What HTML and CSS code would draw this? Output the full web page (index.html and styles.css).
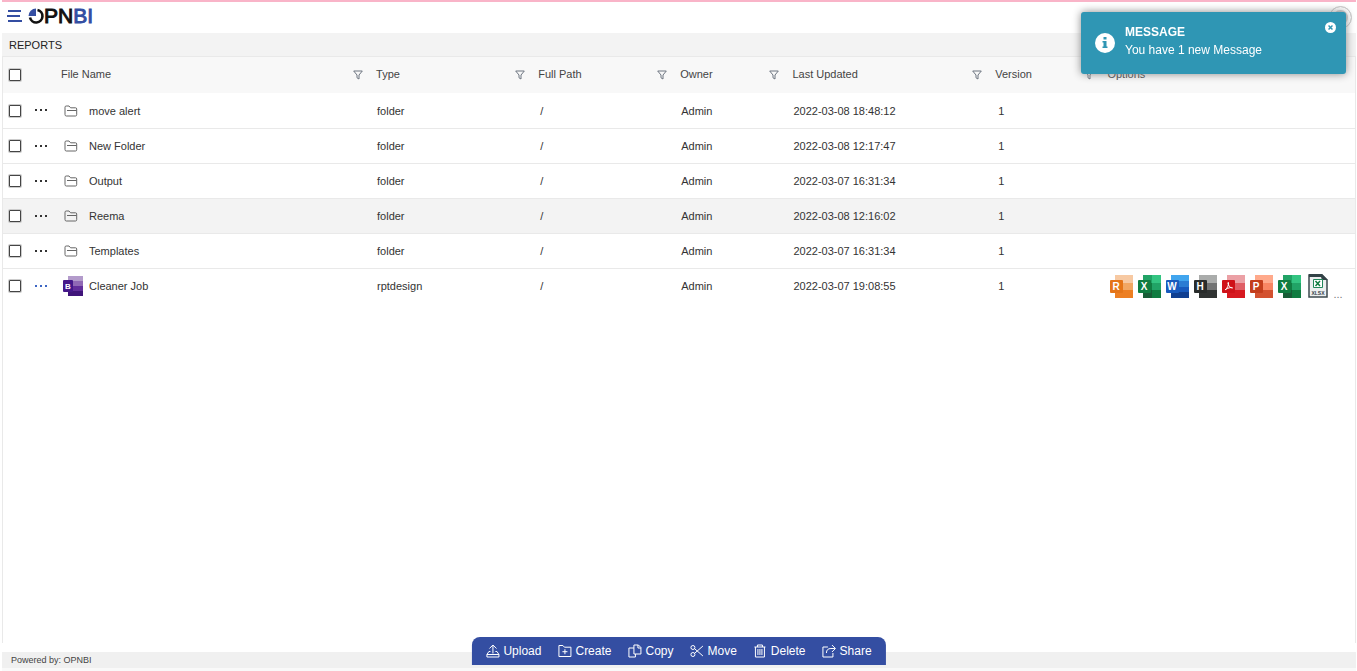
FILE: index.html
```html
<!DOCTYPE html>
<html lang="en">
<head>
<meta charset="utf-8">
<title>OPNBI Reports</title>
<link rel="stylesheet" href="styles.css">
</head>
<body>
<svg class="defs" aria-hidden="true">
  <symbol id="funnel" viewBox="0 0 10 10"><path d="M.7 1h8.600L6 5v4L4 7.800V5z" fill="none" stroke="#6d7580" stroke-width="1"/></symbol>
  <symbol id="folder" viewBox="0 0 14 12"><path d="M1 9.500V2.200Q1 1 2.200 1H5l1.600 1.800H11.500Q12.700 2.800 12.700 4V9.700Q12.700 11 11.500 11H2.300Q1 11 1 9.500zM3 5.500h9.500" fill="none" stroke="#666" stroke-width="1"/></symbol>
  <symbol id="dots" viewBox="0 0 14 4"><path d="M1 1h2v2H1zM6 1h2v2H6zM11 1h2v2h-2z" fill="currentColor"/></symbol>
</svg>
<header class="topbar">
  <button class="plain menu" aria-label="Menu"><svg width="16" height="14" viewBox="0 0 16 14"><path d="M2 2h13M1 7h13M2 12h14" stroke="#344ea2" stroke-width="2"/></svg></button>
  <a class="logo" href="#" aria-label="OPNBI"><svg width="17" height="17" viewBox="0 0 17 17"><path d="M9.500 2A6.300 6.300 0 1 1 2 9.500" fill="none" stroke="#111" stroke-width="2.600"/><path d="M8 8H.5A7.500 7.500 0 0 1 8 .5z" fill="#344ea2"/></svg><span>PN<b>BI</b></span></a>
  <button class="avatar" aria-label="Account"></button>
</header>
<main>
  <h1>REPORTS</h1>
  <div class="panel">
  <table>
    <colgroup><col class="c-check"><col class="c-menu"><col class="c-name"><col class="c-type"><col class="c-path"><col class="c-owner"><col class="c-date"><col class="c-version"><col></colgroup>
    <thead><tr>
      <th><input type="checkbox" aria-label="Select all"></th><th></th>
      <th><div class="head">File Name<svg class="funnel"><use href="#funnel"/></svg></div></th>
      <th><div class="head">Type<svg class="funnel"><use href="#funnel"/></svg></div></th>
      <th><div class="head">Full Path<svg class="funnel"><use href="#funnel"/></svg></div></th>
      <th><div class="head">Owner<svg class="funnel"><use href="#funnel"/></svg></div></th>
      <th><div class="head">Last Updated<svg class="funnel"><use href="#funnel"/></svg></div></th>
      <th><div class="head">Version<svg class="funnel"><use href="#funnel"/></svg></div></th>
      <th><div class="head">Options</div></th>
    </tr></thead>
    <tbody>
      <tr><td><input type="checkbox" aria-label="Select move alert"></td><td><button class="plain" aria-label="Actions"><svg class="dots"><use href="#dots"/></svg></button></td><td><div class="file"><svg class="folder"><use href="#folder"/></svg>move alert</div></td><td>folder</td><td class="path">/</td><td>Admin</td><td>2022-03-08 18:48:12</td><td class="version">1</td><td></td></tr>
      <tr><td><input type="checkbox" aria-label="Select New Folder"></td><td><button class="plain" aria-label="Actions"><svg class="dots"><use href="#dots"/></svg></button></td><td><div class="file"><svg class="folder"><use href="#folder"/></svg>New Folder</div></td><td>folder</td><td class="path">/</td><td>Admin</td><td>2022-03-08 12:17:47</td><td class="version">1</td><td></td></tr>
      <tr><td><input type="checkbox" aria-label="Select Output"></td><td><button class="plain" aria-label="Actions"><svg class="dots"><use href="#dots"/></svg></button></td><td><div class="file"><svg class="folder"><use href="#folder"/></svg>Output</div></td><td>folder</td><td class="path">/</td><td>Admin</td><td>2022-03-07 16:31:34</td><td class="version">1</td><td></td></tr>
      <tr class="hovered"><td><input type="checkbox" aria-label="Select Reema"></td><td><button class="plain" aria-label="Actions"><svg class="dots"><use href="#dots"/></svg></button></td><td><div class="file"><svg class="folder"><use href="#folder"/></svg>Reema</div></td><td>folder</td><td class="path">/</td><td>Admin</td><td>2022-03-08 12:16:02</td><td class="version">1</td><td></td></tr>
      <tr><td><input type="checkbox" aria-label="Select Templates"></td><td><button class="plain" aria-label="Actions"><svg class="dots"><use href="#dots"/></svg></button></td><td><div class="file"><svg class="folder"><use href="#folder"/></svg>Templates</div></td><td>folder</td><td class="path">/</td><td>Admin</td><td>2022-03-07 16:31:34</td><td class="version">1</td><td></td></tr>
      <tr><td><input type="checkbox" aria-label="Select Cleaner Job"></td><td><button class="plain blue" aria-label="Actions"><svg class="dots"><use href="#dots"/></svg></button></td>
        <td><div class="file job"><svg width="20" height="20" viewBox="0 0 20 20"><path d="M5 0h15v5H5z" fill="#b39bcb"/><path d="M5 5h15v5H5z" fill="#9068b5"/><path d="M5 10h15v5H5z" fill="#632e9b"/><path d="M5 15h15v5H5z" fill="#40147a"/><rect y="4" width="10" height="12" rx="1" fill="#45188a"/><text x="5" y="13" class="tile-s">B</text></svg>Cleaner Job</div></td>
        <td>rptdesign</td><td class="path">/</td><td>Admin</td><td>2022-03-07 19:08:55</td><td class="version">1</td>
        <td><div class="exports">
          <button class="plain" aria-label="Report"><svg class="app"><path d="M5 0h18v12H5z" fill="#f7c9a2"/><path d="M5 8h18v8H5z" fill="#f2a763"/><path d="M5 15h18v8H5z" fill="#ed7f22"/><rect y="5" width="13" height="13" rx="1" fill="#e57518"/><text x="6" y="15" class="tile">R</text></svg></button>
          <button class="plain" aria-label="Excel"><svg class="app"><path d="M5 0h9v8H5z" fill="#21a366"/><path d="M14 0h9v8h-9z" fill="#33c481"/><path d="M5 8h18v8H5z" fill="#107c41"/><path d="M14 8h9v8h-9z" fill="#21a366"/><path d="M5 15h18v8H5z" fill="#185c37"/><path d="M14 15h9v8h-9z" fill="#107c41"/><rect y="5" width="13" height="13" rx="1" fill="#107c41"/><text x="6" y="15" class="tile">X</text></svg></button>
          <button class="plain" aria-label="Word"><svg class="app"><path d="M5 0h18v6H5z" fill="#41a5ee"/><path d="M5 6h18v6H5z" fill="#2b7cd3"/><path d="M5 12h18v6H5z" fill="#185abd"/><path d="M5 17h18v6H5z" fill="#103f91"/><rect y="5" width="13" height="13" rx="1" fill="#185abd"/><text x="6" y="15" class="tile">W</text></svg></button>
          <button class="plain" aria-label="HTML"><svg class="app"><path d="M5 0h18v8H5z" fill="#aaacab"/><path d="M5 8h18v8H5z" fill="#727474"/><path d="M5 15h18v8H5z" fill="#303332"/><rect y="5" width="13" height="13" rx="1" fill="#292c2b"/><text x="6" y="15" class="tile">H</text></svg></button>
          <button class="plain" aria-label="PDF"><svg class="app"><path d="M5 0h18v8H5z" fill="#eba0a5"/><path d="M5 8h18v8H5z" fill="#e05e65"/><path d="M5 15h18v8H5z" fill="#d71920"/><rect y="5" width="13" height="13" rx="1" fill="#cf1118"/><path d="M3 15c2-1 4-5 3.500-7.500C6 7 5.500 8 6.500 10c1 2 2.500 3 4 3 0-1-4-.5-7 1.500" fill="none" stroke="#fff" stroke-width="1"/></svg></button>
          <button class="plain" aria-label="PowerPoint"><svg class="app"><path d="M5 0h18v8H5z" fill="#ffa98b"/><path d="M5 8h18v8H5z" fill="#f98663"/><path d="M5 15h18v8H5z" fill="#d35230"/><rect y="5" width="13" height="13" rx="1" fill="#c43e1c"/><text x="6" y="15" class="tile">P</text></svg></button>
          <button class="plain" aria-label="Excel data"><svg class="app"><path d="M5 0h9v8H5z" fill="#21a366"/><path d="M14 0h9v8h-9z" fill="#33c481"/><path d="M5 8h18v8H5z" fill="#107c41"/><path d="M14 8h9v8h-9z" fill="#21a366"/><path d="M5 15h18v8H5z" fill="#185c37"/><path d="M14 15h9v8h-9z" fill="#107c41"/><rect y="5" width="13" height="13" rx="1" fill="#107c41"/><text x="6" y="15" class="tile">X</text></svg></button>
          <button class="plain xlsx" aria-label="XLSX"><svg class="sheet" viewBox="0 0 20 24"><path d="M1 1h13l5 5v17H1z" fill="#eceeef" stroke="#3d4a4f" stroke-width="1.500"/><path d="M1 0h13l6 6h-6l-1-3H1z" fill="#334247"/><path d="M5.500 5.500h9v8h-9z" fill="#fff" stroke="#21875a"/><path d="M7.500 7l4.500 5M12 7l-4.500 5" stroke="#107c41" stroke-width="1.500"/><text x="10" y="21" class="tile-x">XLSX</text></svg></button>
          <span class="more">...</span>
        </div></td></tr>
    </tbody>
  </table>
  </div>
</main>
<footer>Powered by: OPNBI</footer>
<nav class="actions" aria-label="File actions">
  <button class="plain"><svg viewBox="0 0 14 14"><path d="M7 9.500V1M3.500 4.500L7 1l3.500 3.500M4.500 7.500H3L1 10.500v2.500h12v-2.500l-2-3H9.500M1 10.500h12"/></svg>Upload</button>
  <button class="plain"><svg viewBox="0 0 14 14"><path d="M1 12.500v-11h4l1.500 1.700H13v9.300zM7 5.200v5M4.500 7.700h5"/></svg>Create</button>
  <button class="plain"><svg viewBox="0 0 14 14"><path d="M6 1h4.500L13 3.500V10H6zM10 1v3h3M6 4H1v9h6.500v-3"/></svg>Copy</button>
  <button class="plain"><svg viewBox="0 0 14 14"><circle cx="3" cy="3.500" r="2"/><circle cx="3" cy="10.500" r="2"/><path d="M4.700 9.300L13 2M4.700 4.700L13 12"/></svg>Move</button>
  <button class="plain"><svg viewBox="0 0 14 14"><path d="M1.500 3h11M4.500 3V1h5v2M2.500 3v10h9V3M5 5v6M7 5v6M9 5v6"/></svg>Delete</button>
  <button class="plain"><svg viewBox="0 0 14 14"><path d="M6 3H1v10h10V9M4.500 9C4.500 6 6 4.500 9 4.500h4M10 1l3.500 3.500L10 8"/></svg>Share</button>
</nav>
<div class="toast" role="status">
  <svg class="info" viewBox="0 0 20 20"><circle cx="10" cy="10" r="10" fill="#fff"/><path d="M8.500 4h3v2.500h-3zM7.500 8h4v5.500h1V15h-5v-1.500h1v-4h-1z" fill="#2f96b4"/></svg>
  <div class="toast-text"><strong>MESSAGE</strong><span>You have 1 new Message</span></div>
  <button class="plain close" aria-label="Close"><svg width="11" height="11" viewBox="0 0 10 10"><circle cx="5" cy="5" r="5" fill="#fff"/><path d="M3.200 3.200l3.600 3.600M6.800 3.200L3.200 6.800" stroke="#2f96b4" stroke-width="1.300"/></svg></button>
</div>
</body>
</html>
```
FILE: styles.css
```css
* { box-sizing: border-box; }
body { margin: 0; min-height: 100vh; padding: 0 1px 0 2px; display: flex; flex-direction: column; background: #fff; color: #333; font: 11px/16px "Liberation Sans", Arial, sans-serif; }
.defs { position: absolute; width: 0; height: 0; }
svg { display: block; flex: none; }
.plain { border: 0; background: none; padding: 0; color: inherit; font: inherit; cursor: pointer; }
.topbar { height: 33px; border-top: 2px solid #f9b4c8; display: flex; align-items: center; padding: 0 4px 3px; }
.logo { display: flex; align-items: center; margin-left: 6px; color: #111; text-decoration: none; font-size: 21px; line-height: 24px; -webkit-text-stroke: 1px; }
.logo span { margin-left: -1px; padding-bottom: 1px; }
.logo b { font-weight: 400; color: #344ea2; }
.avatar { width: 23px; height: 23px; margin: 3px 0 0 auto; padding: 0; border: 1px solid #ccc; border-radius: 50%; background: #ccc; box-shadow: inset 0 0 0 3px #fff; }
main { flex: 1; display: flex; flex-direction: column; margin-bottom: 9px; }
h1 { margin: 0; height: 23px; padding-left: 7px; background: #f3f3f3; font-size: 11px; font-weight: 400; line-height: 24px; color: #222; }
.panel { flex: 1; border: 1px solid #e9e9e9; border-bottom: 0; }
table { width: 100%; border-collapse: collapse; table-layout: fixed; }
.c-check { width: 25px; } .c-menu { width: 25px; } .c-name { width: 23.3%; } .c-type { width: 12%; } .c-path { width: 10.5%; } .c-owner { width: 8.3%; } .c-date { width: 15%; } .c-version { width: 8.3%; }
th, td { padding: 1px 0 0 9px; text-align: left; font-weight: 400; white-space: nowrap; }
th { height: 36px; padding: 0 0 2px 8px; background: #f8f8f8; color: #444; }
th:first-child { padding: 0 0 0 6px; }
td:first-child { padding-left: 6px; }
td:nth-child(2) { padding: 0 0 0 6px; }
td { height: 35px; border-bottom: 1px solid #e9e9e9; }
tr:last-child td { border-bottom: 0; }
.hovered td { background: #f3f3f3; }
td.path { padding-left: 10px; }
td.version { padding-left: 11px; }
.head { display: flex; align-items: center; justify-content: space-between; padding-right: 5px; }
.funnel { width: 10px; height: 10px; margin-top: 2px; }
input { appearance: none; display: block; width: 12px; height: 12px; margin: 0; border: 1px solid #444; border-radius: 1px; background: #fff; box-shadow: 0 0 0 1px #ccc; }
td .plain { display: block; }
.dots { width: 14px; height: 4px; }
.blue { color: #3c66c4; }
.file { display: flex; align-items: center; gap: 11px; padding-left: 2px; }
.folder { width: 14px; height: 12px; }
.job { gap: 6px; padding-left: 1px; }
.exports { display: flex; align-items: center; gap: 5px; padding-left: 2px; }
.app { width: 23px; height: 23px; }
.sheet { width: 20px; height: 24px; }
.xlsx { margin-left: 2px; }
.more { align-self: flex-end; line-height: 8px; color: #777; }
.tile, .tile-s, .tile-x { fill: #fff; font-weight: 700; text-anchor: middle; }
.tile { font-size: 10px; } .tile-s { font-size: 8px; } .tile-x { font-size: 5px; fill: #334247; }
footer { background: #f0f0f0; border-bottom: 3px solid #f9f9f9; padding-left: 9px; font-size: 9px; line-height: 16px; color: #444; }
.actions { position: fixed; bottom: 6px; left: 50%; transform: translateX(-50%); height: 28px; display: flex; gap: 16px; align-items: center; padding: 0 14px; border-radius: 8px 8px 0 0; background: #344ea2; color: #fff; font-size: 12px; }
.actions button { display: flex; align-items: center; gap: 4px; }
.actions svg { width: 14px; height: 14px; fill: none; stroke: #fff; stroke-width: 1; }
.toast { position: fixed; top: 12px; right: 11px; width: 265px; min-height: 62px; padding: 11px 10px 15px 14px; display: flex; align-items: center; gap: 10px; border-radius: 3px; background: #2f96b4; box-shadow: 0 0 9px #888; color: #fff; font-size: 12px; line-height: 18px; }
.info { width: 20px; height: 20px; margin-top: 4px; }
.toast-text { display: flex; flex-direction: column; flex: 1; }
.close { align-self: flex-start; }
.close svg { margin-top: -1px; }
```
